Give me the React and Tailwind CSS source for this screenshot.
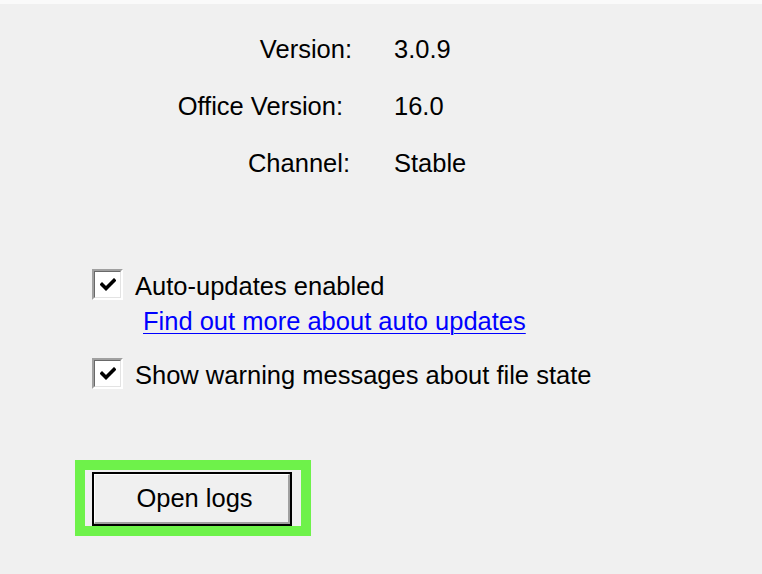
import React from 'react'

function CheckBox({ checked }) {
  return (
    <div className="w-[31px] h-[31px] shrink-0 border-2 border-t-[#a0a0a0] border-l-[#a0a0a0] border-b-white border-r-white">
      <div className="w-full h-full bg-white border border-t-[#696969] border-l-[#696969] border-b-[#e3e3e3] border-r-[#e3e3e3] flex items-center justify-center">
        {checked && (
          <svg width="16" height="14" viewBox="0 0 16 14">
            <polyline points="2,6.5 6,10.5 14,2.5" fill="none" stroke="#000" strokeWidth="3.6" strokeLinecap="square" />
          </svg>
        )}
      </div>
    </div>
  )
}

const info = [
  { label: 'Version:', value: '3.0.9', pr: 'pr-0' },
  { label: 'Office Version:', value: '16.0', pr: 'pr-[9px]' },
  { label: 'Channel:', value: 'Stable', pr: 'pr-[2px]' },
]

export default function App() {
  return (
    <div className="w-[762px] h-[574px] bg-[#f0f0f0] text-black text-[25.5px] overflow-hidden font-['Liberation_Sans',Arial,sans-serif]">
      <div className="h-[4px] bg-[#fafafa]" />

      <div className="pt-[17px] grid grid-cols-[352px_auto] gap-x-[42px]">
        {info.map((row) => (
          <React.Fragment key={row.label}>
            <div className={`h-[57px] leading-[57px] text-right whitespace-nowrap ${row.pr}`}>{row.label}</div>
            <div className="h-[57px] leading-[57px]">{row.value}</div>
          </React.Fragment>
        ))}
      </div>

      <div className="ml-[92px] mt-[77px] flex flex-col">
        <div className="flex items-center gap-[12px] h-[31px]">
          <CheckBox checked />
          <span className="leading-[31px] pt-[3px] whitespace-nowrap">Auto-updates enabled</span>
        </div>
        <a href="#" className="ml-[51px] mt-[6px] leading-[31px] text-[#0000ff] underline underline-offset-[3px] decoration-1 w-fit whitespace-nowrap">
          Find out more about auto updates
        </a>
        <div className="flex items-center gap-[12px] h-[31px] mt-[21px]">
          <CheckBox checked />
          <span className="leading-[31px] pt-[3px] whitespace-nowrap">Show warning messages about file state</span>
        </div>
      </div>

      <div className="ml-[75px] mt-[71px] w-fit border-[10px] border-[#6ef24a] pl-[7px] pr-[9px] pt-[2px]">
        <button className="w-[200px] h-[54px] border-2 border-black bg-[#f0f0f0] p-0">
          <div className="w-full h-full border border-t-white border-l-white border-b-[#a0a0a0] border-r-[#a0a0a0] border-b-2 border-r-2 flex items-center justify-center pl-[6px]">
            Open logs
          </div>
        </button>
      </div>
    </div>
  )
}
